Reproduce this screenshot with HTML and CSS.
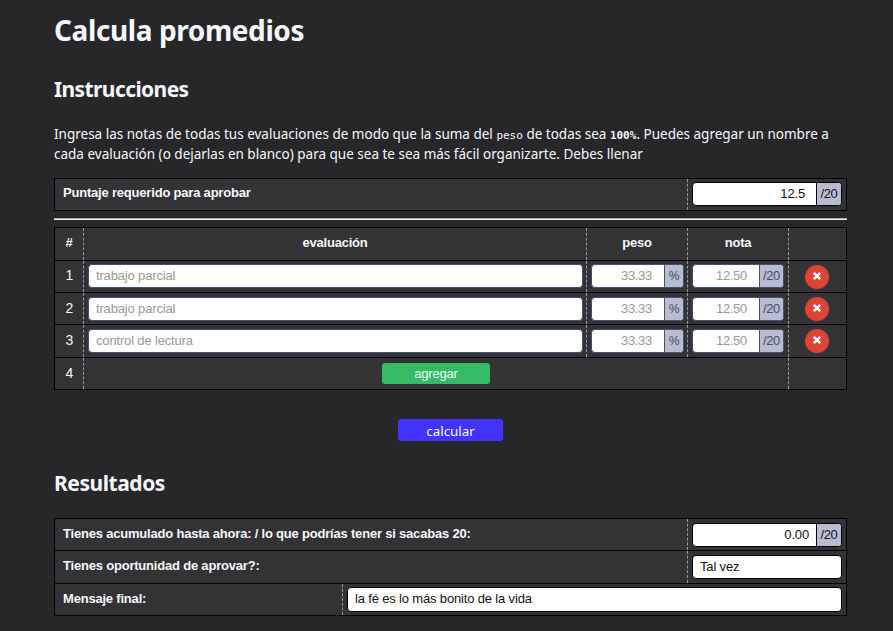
FILE: index.html
```
<!DOCTYPE html>
<html lang="es">
<head>
<meta charset="utf-8">
<title>Calcula promedios</title>
<link rel="stylesheet" href="styles.css">
</head>
<body>
<main>
  <h1><span class="t-title">Calcula promedios</span></h1>
  <h2><span class="t-inst">Instrucciones</span></h2>
  <p class="intro"><span class="line1">Ingresa las notas de todas tus evaluaciones de modo que la suma del <code>peso</code> de todas sea <code><b>100%</b></code>. Puedes agregar un nombre a</span><br><span class="line2">cada evaluación (o dejarlas en blanco) para que sea te sea más fácil organizarte. Debes llenar</span></p>

  <section class="table">
    <div class="row pair"><div class="label">Puntaje requerido para aprobar</div><div class="cell"><div class="field"><span class="value wide">12.5</span><span class="unit">/20</span></div></div></div>
  </section>
  <hr>
  <section class="table">
    <div class="row grades head"><div>#</div><div>evaluación</div><div>peso</div><div>nota</div><div></div></div>
    <div class="row grades"><div class="num">1</div><div class="cell snug"><div class="field dim"><span class="text">trabajo parcial</span></div></div><div class="cell snug"><div class="field dim"><span class="value">33.33</span><span class="unit pct">%</span></div></div><div class="cell"><div class="field dim"><span class="value">12.50</span><span class="unit">/20</span></div></div><div class="cell remove first"><button class="close"><svg viewBox="0 0 10 10"><path d="M1.8 1.8L8.2 8.2M8.2 1.8L1.8 8.2"/></svg></button></div></div>
    <div class="row grades low"><div class="num">2</div><div class="cell snug"><div class="field dim"><span class="text">trabajo parcial</span></div></div><div class="cell snug"><div class="field dim"><span class="value">33.33</span><span class="unit pct">%</span></div></div><div class="cell"><div class="field dim"><span class="value">12.50</span><span class="unit">/20</span></div></div><div class="cell remove"><button class="close"><svg viewBox="0 0 10 10"><path d="M1.8 1.8L8.2 8.2M8.2 1.8L1.8 8.2"/></svg></button></div></div>
    <div class="row grades low tall"><div class="num">3</div><div class="cell snug"><div class="field dim"><span class="text">control de lectura</span></div></div><div class="cell snug"><div class="field dim"><span class="value">33.33</span><span class="unit pct">%</span></div></div><div class="cell"><div class="field dim"><span class="value">12.50</span><span class="unit">/20</span></div></div><div class="cell remove"><button class="close"><svg viewBox="0 0 10 10"><path d="M1.8 1.8L8.2 8.2M8.2 1.8L1.8 8.2"/></svg></button></div></div>
    <div class="row adder low"><div class="num">4</div><div class="add-cell"><button class="add">agregar</button></div><div></div></div>
  </section>
  <button class="calc">calcular</button>

  <h2 class="results"><span class="t-res">Resultados</span></h2>
  <section class="table">
    <div class="row pair low"><div class="label">Tienes acumulado hasta ahora: / lo que podrías tener si sacabas 20:</div><div class="cell"><div class="field"><span class="value">0.00</span><span class="unit">/20</span></div></div></div>
    <div class="row pair low tall"><div class="label">Tienes oportunidad de aprovar?:</div><div class="cell"><div class="field"><span class="text">Tal vez</span></div></div></div>
    <div class="row message"><div class="label">Mensaje final:</div><div class="cell"><div class="field high"><span class="text">la fé es lo más bonito de la vida</span></div></div></div>
  </section>
</main>
</body>
</html>
```
FILE: styles.css
```
* { box-sizing: border-box; }
body {
  margin: 0;
  height: 631px;
  overflow: hidden;
  background: #272729;
  color: #f4f8fc;
  font-family: "Noto Sans", "Open Sans", sans-serif;
}
main { width: 793px; margin-left: 54px; }
h1, h2, p { margin: 0; white-space: nowrap; }
h1 { padding-top: 10px; height: 70px; font-size: 28px; line-height: 40px; }
h2 { height: 54px; font-size: 21px; line-height: 38px; }
.t-title { letter-spacing: -0.4px; }
.t-inst { letter-spacing: -0.6px; }
.t-res { letter-spacing: -0.45px; }
.intro { height: 54px; font-size: 13.5px; line-height: 20px; }
code { font-family: "DejaVu Sans Mono", monospace; font-size: 11px; line-height: 1; }
.table {
  border: 1px solid #000;
  background: #333335;
  font: 13px "Liberation Sans", Arial, sans-serif;
}
.row { display: grid; height: 32px; border-bottom: 1px solid #000; }
.row:last-child { height: 31px; border-bottom: 0; }
.row > div + div { border-left: 1px dashed #999; }
.pair { grid-template-columns: 632px 159px; }
.message { grid-template-columns: 287px 504px; }
.grades { grid-template-columns: 28px 503px 101px 101px 58px; }
.adder { grid-template-columns: 28px 705px 58px; }
.row.head { height: 33px; font-weight: bold; text-align: center; line-height: 29px; letter-spacing: -0.2px; }
.row.tall { height: 33px; }
.label { padding-left: 8px; font-weight: bold; line-height: 28px; letter-spacing: -0.2px; }
.low .label, .message .label { line-height: 30px; }
.num { padding-left: 1px; text-align: center; line-height: 29px; font-size: 14px; }
.low .num { line-height: 31px; }
.cell { padding: 3px 4px; min-width: 0; }
.cell.snug { padding-right: 3px; }
.low .cell { padding-top: 4px; }
.field {
  display: flex;
  height: 24px;
  overflow: hidden;
  border: 1px solid #000;
  border-radius: 4px;
  background: #fff;
  color: #111;
  line-height: 22px;
  letter-spacing: -0.16px;
}
.field.high { height: 25px; }
.dim { border-color: #405078; color: #999; }
.text { padding-left: 7px; }
.value { flex: 1; padding-right: 7px; text-align: right; }
.dim .value { padding-right: 12px; letter-spacing: -0.3px; }
.value.wide { padding-right: 11px; }
.unit {
  width: 25px;
  border-left: 1px solid #000;
  background: #b9bbce;
  color: #112;
  text-align: center;
  letter-spacing: -0.4px;
}
.dim .unit { width: 24px; border-color: #405078; color: #405070; }
.dim .unit.pct { width: 19px; font-size: 12px; }
.remove { padding-left: 16px; }
.remove.first { padding-top: 4px; }
button { display: block; padding: 0; border: 0; color: #f4f8fc; }
.close {
  display: flex;
  align-items: center;
  justify-content: center;
  width: 24px;
  height: 24px;
  border-radius: 50%;
  background: #dd4433;
}
.close svg { width: 10px; height: 10px; margin-top: -2px; fill: none; stroke: #fff; stroke-width: 2.4; }
.add-cell { padding: 5px 0 0 298px; }
.add {
  width: 108px;
  height: 21px;
  border-radius: 3px;
  background: #33bb66;
  font: 13px/21px "Liberation Sans", Arial, sans-serif;
  letter-spacing: -0.2px;
}
.calc {
  width: 105px;
  height: 22px;
  margin: 29px 0 0 344px;
  border-radius: 3px;
  background: #4433ff;
  font: 13.33px/24px "Noto Sans", sans-serif;
}
hr { height: 2px; margin: 7px 0; border: 0; border-top: 1px solid #aaa; background: #f4f4f4; }
.results { margin-top: 23px; }
```
